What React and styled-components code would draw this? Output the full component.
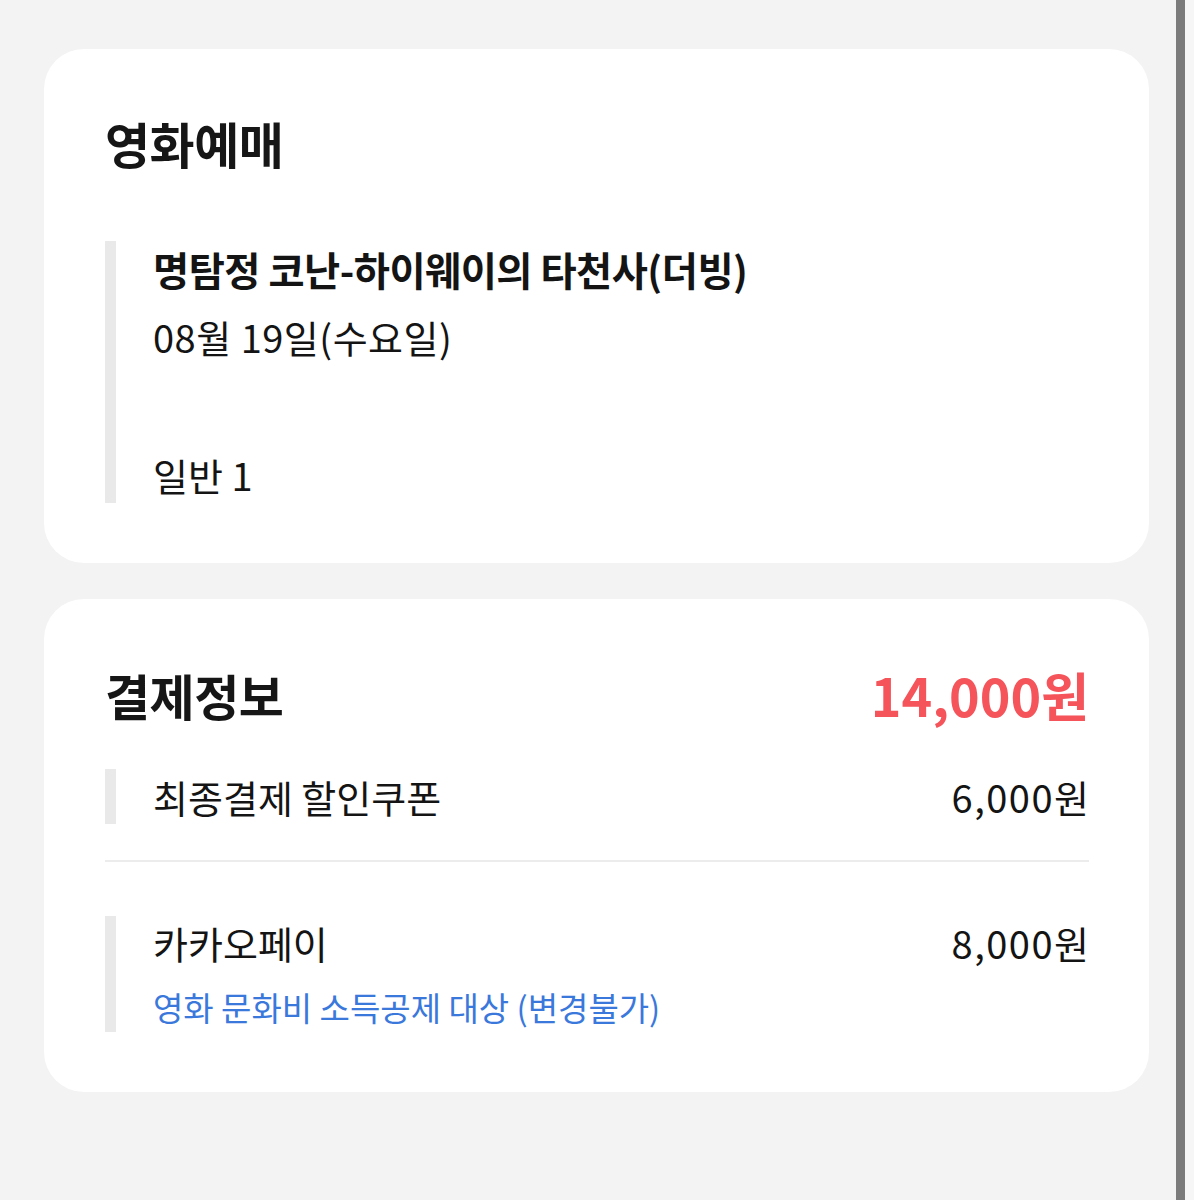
import React from "react";
import styled, { createGlobalStyle } from "styled-components";

const Global = createGlobalStyle`
  html, body { margin: 0; padding: 0; background: #f3f3f3; }
  body { font-family: "Noto Sans CJK KR", "Noto Sans", sans-serif; color: #141414; }
`;

const Frame = styled.div`
  display: flex;
  min-height: 1200px;
  background: #f3f3f3;
`;

const Content = styled.main`
  flex: 1;
  display: flex;
  flex-direction: column;
  gap: 36px;
  padding: 49px 27px 0 44px;
`;

const EdgeBar = styled.div`
  width: 9px;
  background: #7b7b7b;
`;

const EdgeStrip = styled.div`
  width: 9px;
  background: #f6f6f6;
`;

const Card = styled.section`
  background: #fff;
  border-radius: 40px;
  padding: ${(p) => p.$pt}px 60px 60px 61px;
  display: flex;
  flex-direction: column;
`;

const HeaderRow = styled.div`
  display: flex;
  justify-content: space-between;
  align-items: center;
  height: 56px;
`;

const Heading = styled.h2`
  margin: 0;
  font-size: 49px;
  line-height: 56px;
  font-weight: 700;
  letter-spacing: -0.5px;
  color: #161616;
`;

const Total = styled.span`
  font-size: 52px;
  line-height: 56px;
  font-weight: 700;
  color: #f4545a;
  letter-spacing: 0px;
`;

const Block = styled.div`
  border-left: 11px solid #e9e9e9;
  padding-left: 37px;
  margin-top: ${(p) => p.$mt || 0}px;
  display: flex;
  flex-direction: column;
`;

const Title = styled.div`
  font-size: 39.3px;
  line-height: 56px;
  font-weight: 700;
  letter-spacing: -0.5px;
`;

const Line = styled.div`
  font-size: 38px;
  line-height: ${(p) => p.$lh || 56}px;
  font-weight: 400;
  margin-top: ${(p) => p.$mt || 0}px;
  color: #141414;
  letter-spacing: ${(p) => p.$ls || 0}px;
`;

const SubNote = styled.div`
  font-size: 33px;
  line-height: 49px;
  margin-top: 13px;
  color: #3a78dc;
  letter-spacing: 0px;
`;

const PayRow = styled.div`
  display: flex;
  justify-content: space-between;
  align-items: flex-start;
  margin-top: ${(p) => p.$mt}px;
`;

const Amount = styled.span`
  font-size: 38px;
  line-height: ${(p) => p.$lh}px;
  letter-spacing: 1.5px;
  margin-right: -1.5px;
  color: #141414;
`;

const Divider = styled.hr`
  border: 0;
  height: 2px;
  background: #ececec;
  margin: 36px 0 0 0;
`;

export default function App() {
  return (
    <>
      <Global />
      <Frame>
        <Content>
          <Card $pt={66}>
            <HeaderRow>
              <Heading>영화예매</Heading>
            </HeaderRow>
            <Block $mt={70}>
              <Title>명탐정 코난-하이웨이의 타천사(더빙)</Title>
              <Line $mt={12} $ls={0.5}>08월 19일(수요일)</Line>
              <Line $mt={82}>일반 1</Line>
            </Block>
          </Card>
          <Card $pt={68}>
            <HeaderRow>
              <Heading>결제정보</Heading>
              <Total>14,000원</Total>
            </HeaderRow>
            <PayRow $mt={46}>
              <Block>
                <Line $lh={55}>최종결제 할인쿠폰</Line>
              </Block>
              <Amount $lh={55}>6,000원</Amount>
            </PayRow>
            <Divider />
            <PayRow $mt={54}>
              <Block>
                <Line $lh={54}>카카오페이</Line>
                <SubNote>영화 문화비 소득공제 대상 (변경불가)</SubNote>
              </Block>
              <Amount $lh={54}>8,000원</Amount>
            </PayRow>
          </Card>
        </Content>
        <EdgeBar />
        <EdgeStrip />
      </Frame>
    </>
  );
}
